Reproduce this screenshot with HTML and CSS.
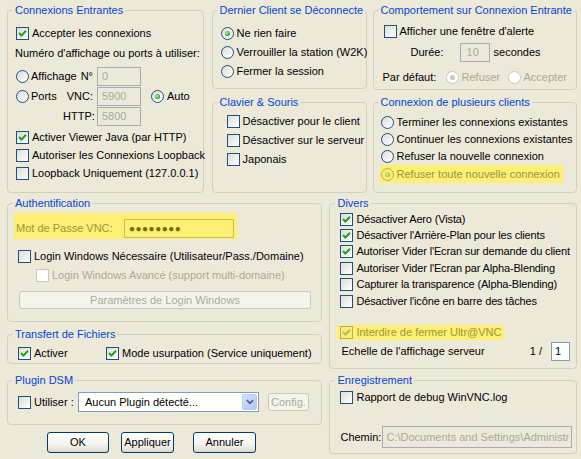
FILE: index.html
```html
<!DOCTYPE html>
<html lang="fr">
<head>
    <meta charset="UTF-8">
    <title>Propriétés UltraVNC Server</title>
    <link rel="stylesheet" href="styles.css">
</head>
<body>
<div class="dialog">
    <div class="top">
        <fieldset class="group g-incoming">
            <legend>Connexions Entrantes</legend>
            <div class="row r-accept"><span class="cb"><svg viewBox="0 0 11 11"><polyline points="2,5 4.5,7.5 9,2.8"/></svg></span>Accepter les connexions</div>
            <div class="row r-note">Numéro d'affichage ou ports à utiliser:</div>
            <div class="ports">
                <div class="prow"><span class="opt"><span class="rb"></span>Affichage</span><span class="plbl">N°</span><span class="edit off">0</span></div>
                <div class="prow"><span class="opt"><span class="rb"></span>Ports</span><span class="plbl">VNC:</span><span class="edit off">5900</span><span class="auto"><span class="rb on"></span>Auto</span></div>
                <div class="prow"><span class="opt"></span><span class="plbl">HTTP:</span><span class="edit off">5800</span></div>
            </div>
            <div class="row r-java"><span class="cb"><svg viewBox="0 0 11 11"><polyline points="2,5 4.5,7.5 9,2.8"/></svg></span>Activer Viewer Java (par HTTP)</div>
            <div class="row r-tight"><span class="cb"></span>Autoriser les Connexions Loopback</div>
            <div class="row r-tight"><span class="cb"></span>Loopback Uniquement (127.0.0.1)</div>
        </fieldset>

        <div class="col col-mid">
            <fieldset class="group g-disconnect">
                <legend>Dernier Client se Déconnecte</legend>
                <div class="row r-radio first"><span class="rb on"></span>Ne rien faire</div>
                <div class="row r-radio"><span class="rb"></span>Verrouiller la station (W2K)</div>
                <div class="row r-radio"><span class="rb"></span>Fermer la session</div>
            </fieldset>
            <fieldset class="group g-keyboard">
                <legend>Clavier &amp; Souris</legend>
                <div class="row r-radio first indent"><span class="cb"></span>Désactiver pour le client</div>
                <div class="row r-radio indent"><span class="cb"></span>Désactiver sur le serveur</div>
                <div class="row r-radio indent"><span class="cb"></span>Japonais</div>
            </fieldset>
        </div>

        <div class="col col-right">
            <fieldset class="group g-behaviour">
                <legend>Comportement sur Connexion Entrante</legend>
                <div class="row r-alert"><span class="cb"></span>Afficher une fenêtre d'alerte</div>
                <div class="row r-delay"><span class="delay-lbl">Durée:</span><span class="edit off e-delay">10</span><span class="unit">secondes</span></div>
                <div class="row r-default"><span class="def-lbl">Par défaut:</span><span class="opt-dis"><span class="rb dis on"></span>Refuser</span><span class="opt-dis"><span class="rb dis"></span>Accepter</span></div>
            </fieldset>
            <fieldset class="group g-multi">
                <legend>Connexion de plusieurs clients</legend>
                <div class="row r-multi first"><span class="rb"></span>Terminer les connexions existantes</div>
                <div class="row r-multi"><span class="rb"></span>Continuer les connexions existantes</div>
                <div class="row r-multi"><span class="rb"></span>Refuser la nouvelle connexion</div>
                <div class="row r-multi last"><span class="hl hl-radio"><span class="rb marked on"></span>Refuser toute nouvelle connexion</span></div>
            </fieldset>
        </div>
    </div>

    <div class="bottom">
        <div class="col col-left">
            <fieldset class="group g-auth">
                <legend>Authentification</legend>
                <div class="hl hl-pass"><span class="pass-lbl">Mot de Passe VNC:</span><span class="pass">●●●●●●●●</span></div>
                <div class="row r-login"><span class="cb"></span>Login Windows Nécessaire (Utilisateur/Pass./Domaine)</div>
                <div class="row r-login-adv muted"><span class="cb dis"></span>Login Windows Avancé (support multi-domaine)</div>
                <button class="btn dis b-login">Paramètres de Login Windows</button>
            </fieldset>
            <fieldset class="group g-transfer">
                <legend>Transfert de Fichiers</legend>
                <div class="row r-transfer">
                    <span class="opt-enable"><span class="cb"><svg viewBox="0 0 11 11"><polyline points="2,5 4.5,7.5 9,2.8"/></svg></span>Activer</span>
                    <span class="cb"><svg viewBox="0 0 11 11"><polyline points="2,5 4.5,7.5 9,2.8"/></svg></span>Mode usurpation (Service uniquement)
                </div>
            </fieldset>
            <fieldset class="group g-plugin">
                <legend>Plugin DSM</legend>
                <div class="row r-plugin">
                    <span class="opt-use"><span class="cb"></span>Utiliser :</span>
                    <span class="combo"><span class="combo-text">Aucun Plugin détecté...</span><span class="combo-btn"><svg viewBox="0 0 9 6"><polyline points="1,1 4.5,4.5 8,1"/></svg></span></span>
                    <button class="btn dis b-config">Config.</button>
                </div>
            </fieldset>
            <div class="actions">
                <button class="btn b-ok">OK</button>
                <button class="btn b-apply">Appliquer</button>
                <button class="btn b-cancel">Annuler</button>
            </div>
        </div>

        <div class="col col-misc">
            <fieldset class="group g-misc">
                <legend>Divers</legend>
                <div class="row r-misc first"><span class="cb"><svg viewBox="0 0 11 11"><polyline points="2,5 4.5,7.5 9,2.8"/></svg></span>Désactiver Aero (Vista)</div>
                <div class="row r-misc"><span class="cb"><svg viewBox="0 0 11 11"><polyline points="2,5 4.5,7.5 9,2.8"/></svg></span>Désactiver l'Arrière-Plan pour les clients</div>
                <div class="row r-misc"><span class="cb"><svg viewBox="0 0 11 11"><polyline points="2,5 4.5,7.5 9,2.8"/></svg></span>Autoriser Vider l'Ecran sur demande du client</div>
                <div class="row r-misc"><span class="cb"></span>Autoriser Vider l'Ecran par Alpha-Blending</div>
                <div class="row r-misc"><span class="cb"></span>Capturer la transparence (Alpha-Blending)</div>
                <div class="row r-misc"><span class="cb"></span>Désactiver l'icône en barre des tâches</div>
                <div class="hl hl-close"><span class="cb marked"><svg viewBox="0 0 11 11"><polyline points="2,5 4.5,7.5 9,2.8"/></svg></span>Interdire de fermer Ultr@VNC</div>
                <div class="row r-scale"><span class="scale-lbl">Echelle de l'affichage serveur</span><span class="ratio">1 /</span><span class="edit e-scale">1</span></div>
            </fieldset>
            <fieldset class="group g-log">
                <legend>Enregistrement</legend>
                <div class="row r-debug"><span class="cb"></span>Rapport de debug WinVNC.log</div>
                <div class="row r-path"><span class="path-lbl">Chemin:</span><span class="edit off e-path">C:\Documents and Settings\Administr</span></div>
            </fieldset>
        </div>
    </div>
</div>
</body>
</html>
```

FILE: styles.css
```css
body {
    margin: 0;
    background-color: #ECE9D8;
    font-family: "Liberation Sans", Arial, sans-serif;
    font-size: 11px;
    line-height: 13px;
    color: #000;
}

.dialog {
    padding: 4px 4px 0 7px;
}

.top, .bottom {
    display: flex;
}

.col {
    display: flex;
    flex-direction: column;
}

/* group boxes */

.group {
    box-sizing: border-box;
    margin: 0;
    padding: 0 0 0 8px;
    min-width: 0;
    border: 1px solid #D0D0BF;
    border-radius: 4px;
}

.group legend {
    color: #0046D5;
    padding: 0 2px;
    margin-left: -3px;
    line-height: 13px;
}

.row {
    display: flex;
    align-items: center;
    white-space: nowrap;
}

/* checkbox / radio */

.cb {
    box-sizing: border-box;
    flex: none;
    width: 13px;
    height: 13px;
    margin-right: 3px;
    border: 1px solid #1C5180;
    background: linear-gradient(135deg, #DCDCD7, #FFFFFF);
    display: inline-flex;
}

.cb svg {
    width: 11px;
    height: 11px;
}

.cb polyline {
    fill: none;
    stroke: #21A121;
    stroke-width: 2;
}

.cb.dis {
    border-color: #CAC8BB;
    background: #FFFFFF;
}

.cb.marked {
    border-color: #B5AC4E;
    background: #F7EC80;
}

.cb.marked polyline {
    stroke: #B7BD4C;
}

.rb {
    box-sizing: border-box;
    flex: none;
    width: 13px;
    height: 13px;
    margin-right: 3px;
    border: 1px solid #1C5180;
    border-radius: 50%;
    background: linear-gradient(135deg, #DCDCD7, #FFFFFF);
    display: inline-flex;
    align-items: center;
    justify-content: center;
}

.rb.on::after {
    content: "";
    width: 5px;
    height: 5px;
    border-radius: 50%;
    background: radial-gradient(circle at 40% 40%, #B8F0AE, #21A121 70%);
}

.rb.dis {
    border-color: #CAC8BB;
    background: #FFFFFF;
}

.rb.dis.on::after {
    background: #CAC8BB;
}

.rb.marked {
    border-color: #B5AC4E;
    background: #F7EC80;
}

.rb.marked.on::after {
    background: radial-gradient(circle at 40% 40%, #E4F08A, #A9BE33 70%);
}

/* edit boxes */

.edit {
    box-sizing: border-box;
    display: flex;
    align-items: center;
    height: 19px;
    padding-left: 4px;
    border: 1px solid #7F9DB9;
    background: #FFFFFF;
    overflow: hidden;
    white-space: nowrap;
}

.edit.off {
    border-color: #A5ACB5;
    background: #ECE9D8;
    color: #ACA899;
}

/* highlighter marks */

.hl {
    background: #FCEF72;
    color: #9C9540;
}

/* Connexions Entrantes */

.g-incoming {
    width: 197px;
    height: 189px;
}

.r-accept {
    margin-top: 7px;
    height: 18px;
}

.r-note {
    margin-top: 2px;
    height: 18px;
    margin-left: -1px;
}

.ports {
    margin-top: 4px;
}

.prow {
    display: flex;
    align-items: center;
    height: 20px;
    white-space: nowrap;
}

.opt {
    display: flex;
    align-items: center;
    width: 47px;
    flex: none;
}

.opt .rb {
    margin-right: 2px;
}

.plbl {
    width: 34px;
    flex: none;
    box-sizing: border-box;
    padding-right: 4px;
    text-align: right;
}

.prow .edit {
    width: 44px;
}

.auto {
    display: flex;
    align-items: center;
    margin-left: 10px;
}

.r-java {
    margin-top: 2px;
    height: 18px;
}

.r-tight {
    height: 18px;
}

/* middle column */

.col-mid {
    margin-left: 8px;
    width: 155px;
}

.g-disconnect {
    height: 85px;
}

.r-radio {
    height: 19px;
}

.r-radio.first {
    margin-top: 7px;
}

.g-keyboard {
    margin-top: 7px;
    height: 97px;
}

.g-keyboard .r-radio.first {
    margin-top: 3px;
}

.indent {
    padding-left: 6px;
}

/* right column */

.col-right {
    margin-left: 6px;
    width: 205px;
}

.g-behaviour {
    height: 86px;
}

.r-alert {
    margin-top: 5px;
    height: 18px;
    padding-left: 2px;
}

.r-delay {
    margin-top: 3px;
    height: 19px;
}

.delay-lbl {
    margin-left: 29px;
    width: 49px;
}

.e-delay {
    width: 30px;
    padding-left: 6px;
}

.unit {
    margin-left: 4px;
}

.r-default {
    margin-top: 6px;
    height: 18px;
    padding-left: 1px;
}

.def-lbl {
    width: 63px;
}

.opt-dis {
    display: flex;
    align-items: center;
    width: 62px;
    color: #ACA899;
}

.g-multi {
    margin-top: 6px;
    height: 97px;
}

.r-multi {
    height: 17px;
    margin-left: -1px;
}

.r-multi.first {
    margin-top: 5px;
}

.r-multi.last {
    height: 18px;
}

.hl-radio {
    display: flex;
    align-items: center;
    height: 18px;
    margin-left: -1px;
    padding: 0 3px 0 1px;
}

/* bottom left */

.bottom {
    margin-top: 4px;
}

.col-left {
    width: 316px;
}

.g-auth {
    height: 125px;
}

.hl-pass {
    display: flex;
    align-items: center;
    width: fit-content;
    height: 19px;
    margin: 3px 0 0 -2px;
    padding: 6px 3px 1px 2px;
}

.pass-lbl {
    width: 108px;
}

.pass {
    box-sizing: border-box;
    display: flex;
    align-items: center;
    width: 110px;
    height: 19px;
    padding-left: 4px;
    border: 1px solid #C6BC5A;
    color: #746C10;
    font-size: 10px;
    letter-spacing: 0.5px;
}

.r-login {
    margin-top: 8px;
    height: 18px;
    padding-left: 2px;
}

.r-login-adv {
    margin-top: 1px;
    height: 18px;
    padding-left: 20px;
}

.muted {
    color: #ACA899;
}

/* buttons */

.btn {
    box-sizing: border-box;
    display: flex;
    align-items: center;
    justify-content: center;
    padding: 0;
    font: inherit;
    color: #000;
    border: 1px solid #003C74;
    border-radius: 3px;
    background: linear-gradient(#FFFFFF, #F4F3EE 60%, #E3E0D6 90%, #D6D0C5);
}

.btn.dis {
    border-color: #C9C7BA;
    background: #F5F4EA;
    color: #ACA899;
}

.b-login {
    margin: 7px 0 0 3px;
    width: 292px;
    height: 18px;
}

.g-transfer {
    margin-top: 6px;
    height: 36px;
}

.r-transfer {
    margin-top: 4px;
    height: 16px;
    padding-left: 2px;
}

.opt-enable {
    display: flex;
    align-items: center;
    width: 88px;
}

.g-plugin {
    margin-top: 10px;
    height: 51px;
}

.r-plugin {
    margin-top: 5px;
    height: 20px;
    padding-left: 2px;
}

.opt-use {
    display: flex;
    align-items: center;
    width: 60px;
}

.combo {
    box-sizing: border-box;
    display: flex;
    align-items: center;
    width: 181px;
    height: 20px;
    padding: 1px;
    border: 1px solid #7F9DB9;
    background: #FFFFFF;
}

.combo-text {
    flex: 1;
    padding-left: 5px;
}

.combo-btn {
    box-sizing: border-box;
    display: flex;
    align-items: center;
    justify-content: center;
    width: 15px;
    height: 16px;
    border: 1px solid #B9CBF3;
    border-radius: 2px;
    background: linear-gradient(135deg, #D2DEFB, #B2C6F3);
}

.combo-btn svg {
    width: 8px;
    height: 6px;
}

.combo-btn polyline {
    fill: none;
    stroke: #4D6185;
    stroke-width: 2;
}

.b-config {
    margin-left: 9px;
    width: 41px;
    height: 18px;
}

.actions {
    display: flex;
    margin-top: 7px;
    padding-left: 40px;
}

.actions .btn {
    height: 21px;
}

.b-ok {
    width: 62px;
}

.b-apply {
    margin-left: 12px;
    width: 53px;
}

.b-cancel {
    margin-left: 19px;
    width: 63px;
}

/* bottom right */

.col-misc {
    margin-left: 7px;
    width: 248px;
}

.g-misc {
    height: 172px;
}

.r-misc {
    height: 16.4px;
    padding-left: 2px;
    letter-spacing: -0.15px;
}

.r-misc.first {
    margin-top: 1px;
}

.hl-close {
    display: flex;
    align-items: center;
    width: fit-content;
    height: 15px;
    margin: 16px 0 0 -1px;
    padding: 0 3px 0 3px;
    white-space: nowrap;
}

.r-scale {
    margin-top: 2px;
    height: 19px;
    padding: 0 6px 0 3px;
}

.scale-lbl {
    flex: 1;
}

.ratio {
    margin-right: 9px;
}

.e-scale {
    width: 19px;
    padding-left: 3px;
}

.g-log {
    margin-top: 5px;
    height: 80px;
}

.r-debug {
    margin-top: 2px;
    height: 16px;
    padding-left: 2px;
}

.r-path {
    margin-top: 21px;
    height: 22px;
    padding-left: 2px;
}

.path-lbl {
    width: 42px;
    flex: none;
}

.e-path {
    width: 190px;
    height: 22px;
    padding-left: 3px;
}
```
